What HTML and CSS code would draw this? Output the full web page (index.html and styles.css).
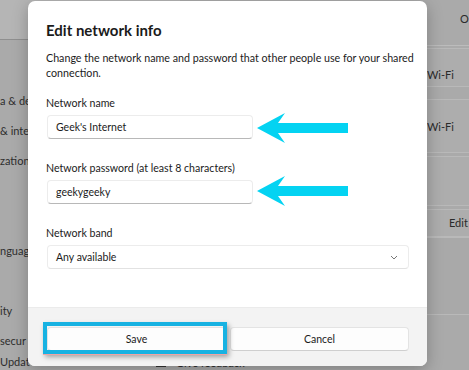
FILE: index.html
```html
<!DOCTYPE html>
<html lang="en">
<head>
  <meta charset="UTF-8">
  <meta name="viewport" content="width=device-width, initial-scale=1">
  <title>Edit network info</title>
  <link rel="stylesheet" href="styles.css">
</head>
<body>

<div class="page">
  <div class="sidebar">
    <div class="side-top"></div>
    <div class="side-item" style="margin-top:53px">a &amp; de</div>
    <div class="side-item">&amp; inte</div>
    <div class="side-item">zation</div>
    <div class="side-item" style="margin-top:60px">nguag</div>
    <div class="side-item" style="margin-top:30px">ity</div>
    <div class="side-item">secur</div>
    <div class="side-item last">Updat</div>
  </div>

  <div class="main">
    <div class="main-top">O</div>
    <div class="card"><span>Wi-Fi</span></div>
    <div class="card tall"><span>Wi-Fi</span></div>
    <div class="card blank"></div>
    <div class="card short"><span class="edit">Edit</span></div>
    <div class="card blank2"></div>
    <div class="feedback"><span class="fb-icon"></span>Give feedback</div>
  </div>
</div>

<div class="dialog">
  <div class="dialog-body">
    <h2>Edit network info</h2>
    <p class="desc">Change the network name and password that other people use for your shared connection.</p>

    <label class="label">Network name</label>
    <div class="field">Geek's Internet</div>

    <label class="label">Network password (at least 8 characters)</label>
    <div class="field">geekygeeky</div>

    <label class="label">Network band</label>
    <div class="field select">
      <span>Any available</span>
      <svg width="8" height="5" viewBox="0 0 8 5"><path d="M1 1 L4 4 L7 1" fill="none" stroke="#777" stroke-width="1"/></svg>
    </div>
  </div>

  <div class="dialog-footer">
    <button class="btn">Save</button>
    <button class="btn">Cancel</button>
  </div>
</div>

<!-- annotations -->
<svg class="arrow arrow-1" width="92" height="32" viewBox="0 0 92 32">
  <polygon points="0,16 28,1 21,11 91,11 91,21 21,21 28,31" fill="#04d3f2"/>
</svg>
<svg class="arrow arrow-2" width="92" height="32" viewBox="0 0 92 32">
  <polygon points="0,16 28,1 21,11 91,11 91,21 21,21 28,31" fill="#04d3f2"/>
</svg>
<div class="highlight"></div>

</body>
</html>
```

FILE: styles.css
```css
* { margin: 0; padding: 0; box-sizing: border-box; }
body {
  font-family: Lato, "Noto Sans", sans-serif;
  background: #aaaaaa;
  width: 469px;
  height: 370px;
  overflow: hidden;
  position: relative;
  color: #1b1b1b;
}
.page {
  display: flex;
  height: 100%;
}
.sidebar {
  width: 180px;
  font-size: 11px;
  color: #2e2e2e;
}
.side-top {
  height: 40px;
  background: #b5b5b5;
  border-bottom: 1px solid #8f8f8f;
}
.side-item {
  height: 30px;
  line-height: 16px;
  white-space: nowrap;
}
.side-item.last {
  height: 12px;
  line-height: 12px;
  margin-top: -7px;
}
.main {
  flex: 1;
  padding-left: 247px;
  font-size: 11px;
  color: #2a2a2a;
  display: flex;
  flex-direction: column;
}
.main-top {
  height: 46px;
  padding: 12px 0 0 33px;
  border-bottom: 1px solid #bcbcbc;
}
.card {
  height: 39px;
  margin-top: 2px;
  background: #adadad;
  border-top: 1px solid #b9b9b9;
  border-bottom: 1px solid #b9b9b9;
  padding-top: 19px;
  white-space: nowrap;
}
.card.tall {
  height: 54px;
  margin-top: 12px;
  padding-top: 20px;
}
.card.blank {
  height: 50px;
  margin-top: 3px;
}
.card.short {
  height: 28px;
  margin-top: 3px;
  padding-top: 6px;
}
.card.blank2 {
  height: 78px;
  margin-top: 0;
  background: #a9a9a9;
}
.edit { padding-left: 22px; }
.feedback {
  position: absolute;
  left: 156px;
  top: 357px;
  font-size: 11px;
  line-height: 12px;
  color: #2a2a2a;
  display: flex;
  align-items: center;
  gap: 10px;
}
.fb-icon {
  width: 10px;
  height: 8px;
  background: #333;
}

/* dialog */
.dialog {
  position: absolute;
  left: 28px;
  top: 1px;
  width: 399px;
  height: 365px;
  background: #ffffff;
  border-radius: 7px;
  box-shadow: 0 4px 16px rgba(0, 0, 0, 0.25);
  overflow: hidden;
  display: flex;
  flex-direction: column;
}
.dialog-body {
  flex: 1;
  padding: 18px 8px 0 18px;
}
h2 {
  font-size: 15px;
  font-weight: 700;
  line-height: 22px;
  margin-bottom: 9px;
}
.desc {
  font-size: 10.7px;
  line-height: 15px;
  margin-bottom: 16px;
}
.label {
  display: block;
  font-size: 10.6px;
  line-height: 14px;
  margin-bottom: 5px;
}
.field {
  width: 206px;
  height: 24px;
  margin-left: 1px;
  border: 1px solid #ececec;
  border-bottom-color: #b8b8b8;
  border-radius: 4px;
  font-size: 10.5px;
  line-height: 22px;
  padding-left: 8px;
  margin-bottom: 22px;
}
.field.select {
  width: 362px;
  display: flex;
  justify-content: space-between;
  align-items: center;
  padding-right: 10px;
  border-bottom-color: #e2e2e2;
}
.dialog-footer {
  height: 59px;
  background: #f3f3f3;
  border-top: 1px solid #ebebeb;
  display: flex;
  gap: 4px;
  padding: 19px 18px 0 19px;
}
.btn {
  flex: 1;
  height: 24px;
  font-family: inherit;
  font-size: 10.5px;
  color: #1b1b1b;
  background: #fdfdfd;
  border: 1px solid #e3e3e3;
  border-bottom-color: #cfcfcf;
  border-radius: 4px;
}

/* annotations */
.arrow {
  position: absolute;
  left: 257px;
}
.arrow-1 { top: 112px; }
.arrow-2 { top: 175px; }
.highlight {
  position: absolute;
  left: 43px;
  top: 322px;
  width: 184px;
  height: 32px;
  border: 4px solid #17b2e2;
  box-shadow: 0 1px 0 #f0a4a4, 2px 3px 5px rgba(0, 0, 0, 0.35);
}
```
